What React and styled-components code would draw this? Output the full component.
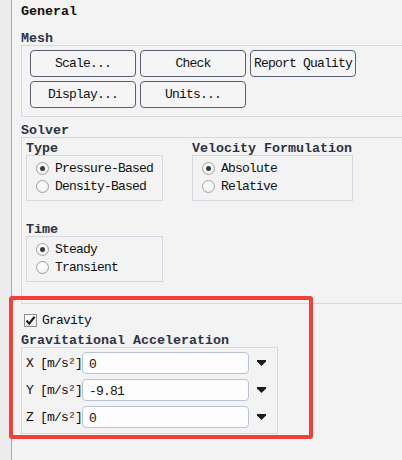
import React from 'react';
import styled, { createGlobalStyle } from 'styled-components';

const Global = createGlobalStyle`
  html, body { margin: 0; padding: 0; background: #f3f3f3; }
  body { width: 402px; height: 460px; overflow: hidden; font-family: "Liberation Mono", "DejaVu Sans Mono", monospace; }
`;

const Frame = styled.div`
  display: flex;
  width: 402px;
  height: 460px;
  overflow: hidden;
`;

const SideStrip = styled.div`
  flex: none;
  width: 11px;
  background: #ececec;
  border-right: 1px solid #ababab;
`;

const Panel = styled.div`
  flex: 1;
  min-width: 0;
  background: #f3f3f3;
  padding: 5px 0 0 9px;
  display: flex;
  flex-direction: column;
  align-items: flex-start;
`;

const Title = styled.div`
  font-weight: bold;
  font-size: 13.33px;
  line-height: 14px;
  color: #111;
`;

const Label = styled.div`
  font-weight: bold;
  font-size: 13.33px;
  line-height: 13px;
  color: #2c3444;
  margin-top: ${p => p.$mt || 0}px;
  white-space: nowrap;
`;

const Group = styled.div`
  border: 1px solid #d3d8e2;
  align-self: stretch;
  margin-right: ${p => (p.$open ? '-30px' : '0')};
`;

const MeshGrid = styled.div`
  display: grid;
  grid-template-columns: repeat(3, 106px);
  grid-auto-rows: 27px;
  gap: 4px;
  padding: 4px 8px 8px;
`;

const Button = styled.button`
  font-family: inherit;
  font-size: 13px;
  letter-spacing: -0.8px;
  color: #111;
  background: #f5f5f5;
  border: 1px solid #586072;
  border-radius: 4px;
  padding: 0;
  margin: 0;
  white-space: nowrap;
`;

const SolverGrid = styled.div`
  display: grid;
  grid-template-columns: 137px 161px;
  column-gap: 29px;
  align-items: start;
  padding: 4px 0 21px 4px;
`;

const Column = styled.div`
  display: flex;
  flex-direction: column;
  align-items: stretch;
`;

const OptionBox = styled.div`
  border: 1px solid #d3d8e2;
  padding: 3px 0 5px 9px;
  display: flex;
  flex-direction: column;
`;

const OptionRow = styled.label`
  display: flex;
  align-items: center;
  height: 18px;
  gap: 6px;
  font-size: 13px;
  letter-spacing: -0.8px;
  color: #111;
  white-space: nowrap;
`;

const Radio = styled.span`
  position: relative;
  flex: none;
  width: 13px;
  height: 13px;
  box-sizing: border-box;
  border-radius: 50%;
  border: 1px solid #a2a2a2;
  background: radial-gradient(circle at 50% 40%, #ffffff 0%, #f4f4f4 60%, #e6e6e6 100%);
  &::after {
    content: '';
    display: ${p => (p.$checked ? 'block' : 'none')};
    position: absolute;
    left: 3px;
    top: 3px;
    width: 5px;
    height: 5px;
    border-radius: 50%;
    background: #3a3a3a;
  }
`;

const GravitySection = styled.div`
  position: relative;
  align-self: stretch;
  display: flex;
  flex-direction: column;
  align-items: flex-start;
  padding-top: 8px;
  &::after {
    content: '';
    position: absolute;
    top: -8px;
    left: -12px;
    right: 89px;
    bottom: -5px;
    border: 4px solid #ef4136;
    border-radius: 3px;
    pointer-events: none;
  }
`;

const CheckRow = styled.label`
  display: flex;
  align-items: center;
  height: 16px;
  gap: 5px;
  margin-left: 3px;
  font-size: 13px;
  letter-spacing: -0.8px;
  color: #111;
`;

const CheckBox = styled.span`
  flex: none;
  width: 13px;
  height: 13px;
  box-sizing: border-box;
  border: 1px solid #8e8e8e;
  background: linear-gradient(#ffffff, #ececec);
  display: flex;
  align-items: center;
  justify-content: center;
`;

const AccelBox = styled.div`
  border: 1px solid #d3d8e2;
  display: grid;
  grid-template-columns: 56px 167px 24px;
  grid-auto-rows: 22px;
  row-gap: 5px;
  padding: 4px 4px 5px 4px;
  align-items: center;
`;

const AxisLabel = styled.span`
  font-size: 13px;
  letter-spacing: -0.8px;
  color: #111;
  white-space: nowrap;
`;

const Input = styled.div`
  height: 22px;
  box-sizing: border-box;
  border: 1px solid #b9c3d4;
  border-radius: 4px;
  background: #fdfdfe;
  padding: 3px 0 0 6px;
  font-size: 13px;
  letter-spacing: -0.8px;
  line-height: 17px;
  color: #111;
`;

const Arrow = styled.span`
  display: flex;
  justify-content: center;
  align-items: center;
`;

const Caret = () => (
  <svg width="9" height="6" viewBox="0 0 9 6">
    <path d="M0 0 H9 V1.5 L4.5 6 L0 1.5 Z" fill="#1c1c1c" />
  </svg>
);

const Check = () => (
  <svg width="11" height="11" viewBox="0 0 11 11">
    <path d="M1.5 5.5 L4.2 8.6 L9.6 1.8" fill="none" stroke="#1f1f1f" strokeWidth="2.2" />
  </svg>
);

const Options = ({ items, checked }) => (
  <OptionBox>
    {items.map(it => (
      <OptionRow key={it}>
        <Radio $checked={it === checked} />
        {it}
      </OptionRow>
    ))}
  </OptionBox>
);

const axes = [
  { a: 'X', v: '0' },
  { a: 'Y', v: '-9.81' },
  { a: 'Z', v: '0' },
];

export default function App() {
  return (
    <>
      <Global />
      <Frame>
        <SideStrip />
        <Panel>
          <Title>General</Title>
          <Label $mt={13}>Mesh</Label>
          <Group $open>
            <MeshGrid>
              <Button>Scale...</Button>
              <Button>Check</Button>
              <Button>Report Quality</Button>
              <Button>Display...</Button>
              <Button>Units...</Button>
            </MeshGrid>
          </Group>
          <Label $mt={7}>Solver</Label>
          <Group $open>
            <SolverGrid>
              <Column>
                <Label>Type</Label>
                <Options items={['Pressure-Based', 'Density-Based']} checked="Pressure-Based" />
                <Label $mt={22}>Time</Label>
                <Options items={['Steady', 'Transient']} checked="Steady" />
              </Column>
              <Column>
                <Label>Velocity Formulation</Label>
                <Options items={['Absolute', 'Relative']} checked="Absolute" />
              </Column>
            </SolverGrid>
          </Group>
          <GravitySection>
            <CheckRow>
              <CheckBox><Check /></CheckBox>
              Gravity
            </CheckRow>
            <Label $mt={6}>Gravitational Acceleration</Label>
            <AccelBox>
              {axes.map(x => (
                <React.Fragment key={x.a}>
                  <AxisLabel>{x.a} [m/s²]</AxisLabel>
                  <Input>{x.v}</Input>
                  <Arrow><Caret /></Arrow>
                </React.Fragment>
              ))}
            </AccelBox>
          </GravitySection>
        </Panel>
      </Frame>
    </>
  );
}
